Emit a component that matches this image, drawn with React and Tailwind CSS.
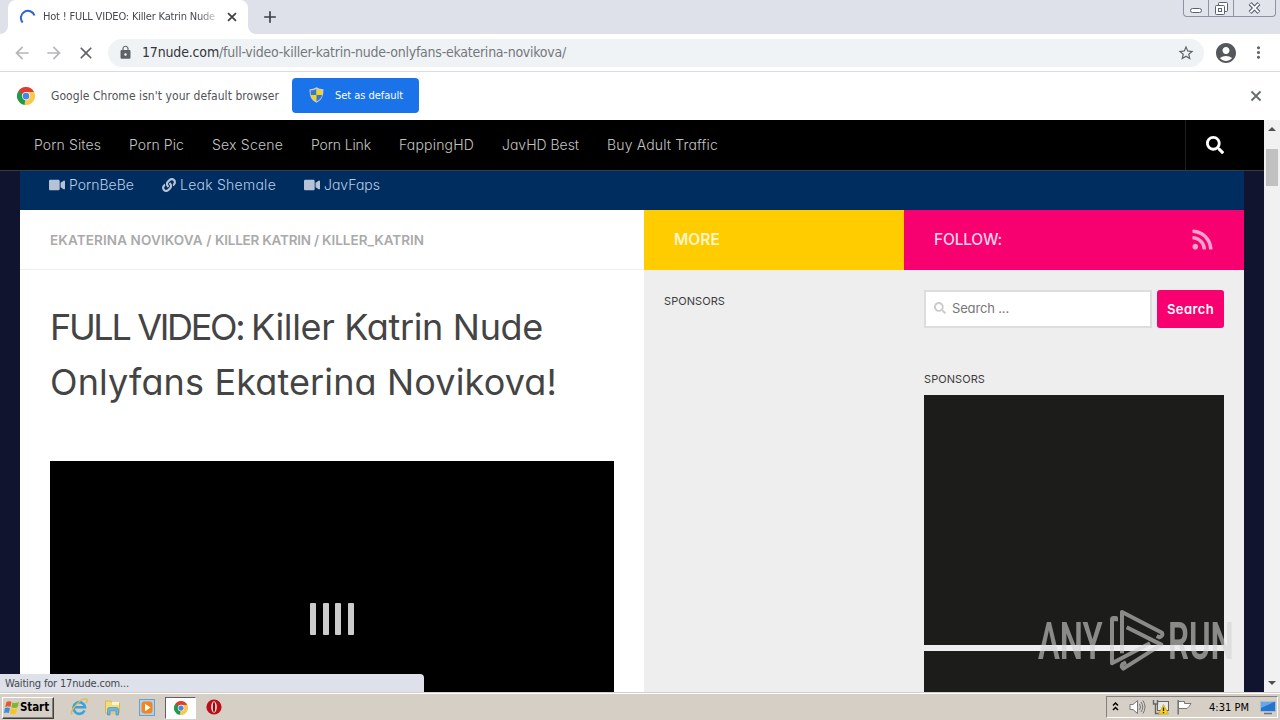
import React, { useLayoutEffect, useRef } from "react";
import { FaVideo, FaLink, FaRss, FaSearch } from "react-icons/fa";
import { MdLock, MdStarBorder, MdAccountCircle, MdMoreVert, MdArrowBack, MdArrowForward, MdClose, MdAdd } from "react-icons/md";

const POPPINS = "font-['Inter',sans-serif] [font-feature-settings:'cv11']";
const TAHOMA = "font-['DejaVu_Sans_Condensed','DejaVu_Sans',sans-serif] [font-stretch:condensed]";

/* Single line of text whose tracking is adjusted to fill the given width. */
function Line({ w, className = "", children }) {
  const ref = useRef(null);
  useLayoutEffect(() => {
    const el = ref.current;
    el.style.letterSpacing = "0px";
    const n = el.textContent.length;
    el.style.letterSpacing = (w - el.getBoundingClientRect().width) / n + "px";
  }, [w]);
  return (
    <span ref={ref} className={"inline-block whitespace-pre " + className}>
      {children}
    </span>
  );
}

function Cross({ size, className }) {
  return (
    <svg width={size} height={size} viewBox="0 0 16 16" className={"shrink-0 " + className}>
      <path d="M3.500 3.500 12.500 12.500M12.500 3.500 3.500 12.500" stroke="currentColor" strokeWidth="2" />
    </svg>
  );
}

function Chrome({ size }) {
  return (
    <svg width={size} height={size} viewBox="0 0 48 48" className="shrink-0">
      <path d="M24 24 3.2 12A24 24 0 0 1 44.8 12Z" fill="#e33b2e" />
      <path d="M24 24 44.8 12A24 24 0 0 1 24 48Z" fill="#fbc94a" />
      <path d="M24 24 24 48A24 24 0 0 1 3.2 12Z" fill="#229a4a" />
      <path d="M24 13H44.8L46 15 34 29Z" fill="#fbc94a" />
      <path d="M33.5 29.5 23 48 20 47.6 22 34Z" fill="#fbc94a" />
      <path d="M14.5 29.5 3.2 12 10 11 19 20Z" fill="#229a4a" />
      <path d="M24 13H45L42 9 24 6 8 11 14.5 20Z" fill="#e33b2e" />
      <circle cx="24" cy="24" r="11" fill="#fff" />
      <circle cx="24" cy="24" r="9" fill="#4a86e8" />
    </svg>
  );
}

function TabStrip() {
  return (
    <div className="flex h-[34px] items-start bg-[#dee1e9]">
      <div className="h-[34px] w-2 bg-white">
        <div className="h-full w-full rounded-br-lg bg-[#dee1e9]" />
      </div>
      <div className="flex h-[34px] w-[240px] items-center rounded-t-lg bg-white pl-[11px]">
        <svg width="17" height="17" viewBox="0 0 17 17" className="shrink-0">
          <path d="M3.700 13.500A7 7 0 1 1 15.500 6.500" fill="none" stroke="#2f66cf" strokeWidth="2" />
        </svg>
        <div className="ml-[7px] w-[173px] overflow-hidden text-[11px] leading-4 text-[#45484d] [mask-image:linear-gradient(to_right,black_155px,transparent_178px)]">
          <Line w={172}>Hot ! FULL VIDEO: Killer Katrin Nude</Line>
        </div>
        <Cross size={14} className="ml-[9px] text-[#3c4043]" />
      </div>
      <div className="h-[34px] w-2 bg-white">
        <div className="h-full w-full rounded-bl-lg bg-[#dee1e9]" />
      </div>
      <MdAdd className="ml-[4px] mt-[7px] text-[20px] text-[#3c4043]" />
      <div className="ml-auto mr-[4px] flex h-[17px] w-[93px] rounded-b border border-t-0 border-[#8d93a1] bg-[#e1e4eb] text-[#596070]">
        <div className="flex w-[25px] items-end justify-center border-r border-[#8d93a1] pb-[3px]">
          <div className="h-[5px] w-[12px] rounded-sm border border-[#596070] bg-white" />
        </div>
        <div className="flex w-[25px] items-center justify-center border-r border-[#8d93a1]">
          <svg width="13" height="13" viewBox="0 0 13 13" fill="#fff" stroke="#596070">
            <rect x="3.5" y=".5" width="9" height="9" rx="1" />
            <rect x=".5" y="3.5" width="9" height="9" rx="1" />
            <rect x="3.5" y="6.5" width="3" height="3" />
          </svg>
        </div>
        <div className="flex flex-1 items-center justify-center">
          <svg width="13" height="12" viewBox="0 0 13 12">
            <path d="M2 1.5 11 10.5M11 1.5 2 10.5" stroke="#596070" strokeWidth="4" />
            <path d="M2.4 1.9 10.6 10.1M10.6 1.9 2.4 10.1" stroke="#fff" strokeWidth="2" />
          </svg>
        </div>
      </div>
    </div>
  );
}

function Toolbar() {
  return (
    <div className="flex h-[38px] items-center border-b border-[#d9dbdf] bg-white">
      <MdArrowBack className="ml-[12px] text-[20px] text-[#b4b6b9]" />
      <MdArrowForward className="ml-[12px] text-[20px] text-[#b4b6b9]" />
      <MdClose className="ml-[12px] text-[20px] text-[#5f6368]" />
      <div className="ml-[12px] flex h-[28px] w-[1096px] items-center rounded-full bg-[#f0f3f5] pl-[10px] pr-[9px]">
        <MdLock className="text-[15px] text-[#5f6368]" />
        <div className="ml-[9px] pb-[2px] text-[14px] leading-5 text-[#74787d]">
          <Line w={77} className="text-[#33363a]">17nude.com</Line>
          <Line w={347}>/full-video-killer-katrin-nude-onlyfans-ekaterina-novikova/</Line>
        </div>
        <MdStarBorder className="ml-auto text-[18px] text-[#5f6368]" />
      </div>
      <MdAccountCircle className="ml-[10px] text-[24px] text-[#54585d]" />
      <MdMoreVert className="ml-[11px] text-[19px] text-[#5f6368]" />
    </div>
  );
}

function InfoBar() {
  return (
    <div className="flex h-[48px] items-center bg-white">
      <div className="ml-[17px] flex"><Chrome size={18} /></div>
      <div className="ml-[16px] text-[12px] leading-4 text-[#505358]">
        <Line w={228}>Google Chrome isn't your default browser</Line>
      </div>
      <div className="mb-[2px] ml-[13px] flex h-[35px] w-[127px] items-center rounded-[4px] bg-[#1a73e8] pl-[17px] text-[11px] leading-4 text-white">
        <svg width="15" height="16" viewBox="0 0 15 16">
          <path d="M7.5.3C9.5 1.6 12 2.2 14.4 2.2 14.5 8 13.500 12.500 7.5 15.800 1.5 12.500.5 8 .6 2.2 3 2.200 5.500 1.600 7.500.3Z" fill="#c9ced4" />
          <path d="M7.500 1.700V8H1.800C1.600 6.300 1.600 4.800 1.700 3.300 4 3.200 5.800 2.700 7.500 1.700Z" fill="#3a79c9" />
          <path d="M7.500 1.700V8H13.200C13.400 6.300 13.400 4.800 13.300 3.300 11 3.200 9.200 2.700 7.500 1.700Z" fill="#f8d21c" />
          <path d="M7.500 14.500V8H1.800C2.400 11 4.300 13 7.500 14.500Z" fill="#f8d21c" />
          <path d="M7.500 14.500V8H13.200C12.600 11 10.700 13 7.500 14.500Z" fill="#3a79c9" />
        </svg>
        <div className="ml-[11px] pt-[2px]"><Line w={68}>Set as default</Line></div>
      </div>
      <Cross size={16} className="ml-auto mr-[16px] text-[#6b6f74]" />
    </div>
  );
}

const nav = [
  ["Porn Sites", 67],
  ["Porn Pic", 55],
  ["Sex Scene", 71],
  ["Porn Link", 60],
  ["FappingHD", 75],
  ["JavHD Best", 77],
  ["Buy Adult Traffic", 111],
];

function SiteNav() {
  return (
    <div className="flex h-[51px] shrink-0 items-center border-b border-[#333a48] bg-black pl-[34px] text-[14px] font-light leading-5 text-[#c4c4c4]">
      <div className="flex gap-[28px]">
        {nav.map(([t, w]) => <Line key={t} w={w}>{t}</Line>)}
      </div>
      <div className="ml-auto flex h-[50px] w-[79px] items-center border-l border-[#1e1e1e] pb-[1px] pl-[20px]">
        <FaSearch className="text-[18px] text-white" />
      </div>
    </div>
  );
}

function SubNav() {
  return (
    <div className="flex h-[39px] shrink-0 gap-[28px] bg-[#002d60] pl-[29px] pt-[4px] text-[14px] font-light leading-5 text-[#b9cbe3]">
      <div className="flex items-center gap-[4px] self-start"><FaVideo className="text-[16px] text-[#b6c3d6]" /><Line w={65}>PornBeBe</Line></div>
      <div className="flex items-center gap-[4px] self-start"><FaLink className="text-[14px] text-[#b6c3d6]" /><Line w={96}>Leak Shemale</Line></div>
      <div className="flex items-center gap-[4px] self-start"><FaVideo className="text-[16px] text-[#b6c3d6]" /><Line w={56}>JavFaps</Line></div>
    </div>
  );
}

function Article() {
  return (
    <div className="w-[624px] overflow-hidden bg-white">
      <div className="flex h-[60px] items-center border-b border-[#eee] pl-[30px] text-[13.500px] font-semibold leading-5 text-[#aaa]">
        <Line w={165}>EKATERINA NOVIKOVA / </Line>
        <Line w={107}>KILLER KATRIN / </Line>
        <Line w={102}>KILLER_KATRIN</Line>
      </div>
      <h1 className="pl-[30px] pt-[30px] text-[36px] leading-[55px] text-[#444]">
        <Line w={201}>FULL VIDEO: </Line>
        <Line w={292}>Killer Katrin Nude</Line>
        <br />
        <Line w={507}>Onlyfans Ekaterina Novikova!</Line>
      </h1>
      <div className="mx-[30px] mt-[51px] flex h-[316px] items-center justify-center gap-[6.700px] bg-black">
        {[0, 1, 2, 3].map((i) => <div key={i} className="h-[32px] w-[6px] rounded-[1px] bg-[#ccc]" />)}
      </div>
    </div>
  );
}

function Middle() {
  return (
    <div className="w-[260px] bg-[#eee]">
      <div className="flex h-[60px] items-center bg-[#fc0] pl-[30px] text-[15.500px] font-semibold leading-5 text-[#fff5cc]">
        <Line w={46}>MORE</Line>
      </div>
      <div className="pl-[20px] pt-[23px] text-[11px] leading-4 text-[#3c3c3c]">
        <Line w={61}>SPONSORS</Line>
      </div>
    </div>
  );
}

function Sidebar() {
  return (
    <div className="w-[340px] bg-[#eee]">
      <div className="flex h-[60px] items-center justify-between bg-[#f7006f] pb-[1px] pl-[30px] pr-[30px] text-[15.500px] font-medium leading-5 text-[#ffd3ea]">
        <Line w={68}>FOLLOW:</Line>
        <FaRss className="text-[23px] text-[#ffa2d0]" />
      </div>
      <div className="px-[20px] pt-[20px]">
        <div className="flex h-[38px] gap-[5px]">
          <div className="flex w-[228px] items-center border-2 border-[#ddd] bg-white pb-[2px] pl-[8px] text-[13px] leading-5 text-[#777]">
            <FaSearch className="text-[12px] text-[#ccc]" />
            <div className="ml-[6px]"><Line w={57}>Search ...</Line></div>
          </div>
          <div className="flex w-[67px] items-center justify-center rounded-[3px] bg-[#f7006f] text-[13px] font-semibold leading-5 text-white">
            <Line w={47}>Search</Line>
          </div>
        </div>
        <div className="mt-[43px] text-[11px] leading-4 text-[#3c3c3c]">
          <Line w={61}>SPONSORS</Line>
        </div>
        <div className="mt-[8px] h-[250px] bg-[#1c1d1a]" />
        <div className="mt-[6px] h-[60px] bg-[#1c1d1a]" />
      </div>
    </div>
  );
}

function Scrollbar() {
  return (
    <div className="flex w-4 flex-col items-center bg-[#f1f1f1]">
      <svg width="16" height="17" viewBox="0 0 16 17"><path d="M4 11 8 7 12 11Z" fill="#505050" /></svg>
      <div className="mt-[12px] h-[37px] w-[12px] bg-[#c1c1c1]" />
      <svg width="16" height="17" viewBox="0 0 16 17" className="mt-auto"><path d="M4 6 8 10 12 6Z" fill="#505050" /></svg>
    </div>
  );
}

function Watermark() {
  return (
    <svg width="206" height="74" viewBox="0 0 206 74" className="absolute left-[1034px] top-[606px] opacity-60 [font-stretch:normal]">
      <g fill="#d4d4d4" fontFamily="Roboto, sans-serif" fontSize="51" fontWeight="600">
        <g transform="translate(4 53) scale(.64 1)"><text textLength="101" lengthAdjust="spacingAndGlyphs">ANY</text></g>
        <g transform="translate(134 53) scale(.64 1)"><text textLength="103" lengthAdjust="spacingAndGlyphs">RUN</text></g>
      </g>
      <g transform="translate(66 -6) scale(.3333)" fill="none" stroke="#d4d4d4" strokeWidth="12" strokeLinejoin="round">
        <path d="M48 64V54H40Q36 54 36 60V190L150 130" />
        <path d="M66 160V36L186 98Q190 108 178 112L170 108" />
        <path d="M80 82 184 134 70 206Q62 200 68 192L78 187" />
      </g>
    </svg>
  );
}

function Taskbar() {
  return (
    <div className="flex h-[28px] shrink-0 items-center border-t border-[#d4d0c8] bg-[#d5cfc6] shadow-[inset_0_1px_0_#fff]">
      <div className="ml-[2px] mt-[2px] flex h-[22px] w-[52px] items-center border border-b-[#404040] border-l-white border-r-[#404040] border-t-white pl-[1px] shadow-[inset_-1px_-1px_0_#808080]">
        <svg width="16" height="15" viewBox="0 0 16 15">
          <path d="M2.500 2Q5 .5 7.500 2L6.300 7Q4 5.600 1.200 7Z" fill="#e8562a" />
          <path d="M8.500 2.400Q11.500 4 15 2L13.600 7.200Q10.500 8.700 7.300 7.300Z" fill="#7db928" />
          <path d="M1 8Q3.500 6.800 6 8.200L4.800 13Q2.500 11.800 0 13Z" fill="#3b8de0" />
          <path d="M7 8.500Q10 10 13.300 8.300L12 13.400Q9 15 5.800 13.500Z" fill="#fcc419" />
        </svg>
        <div className="pb-[1px] text-[11.500px] font-bold leading-4 text-black"><Line w={29}>Start</Line></div>
      </div>
      <svg width="18" height="18" viewBox="0 0 18 18" className="ml-[16px] mt-[1px]">
        <path d="M14.500 12.500A5.800 5.800 0 1 1 15 9.200H5" fill="none" stroke="#36a2df" strokeWidth="2.600" />
        <path d="M2 16.500C-1 13 12-2 17 1.500 17.500 2.500 17 4 16 5" fill="none" stroke="#e2b94a" strokeWidth="1.300" />
      </svg>
      <svg width="18" height="17" viewBox="0 0 18 17" className="ml-[16px] mt-[1px]">
        <path d="M1.500 2H7L8.500 4H15.500V14H1.500Z" fill="#f5dc7b" stroke="#d4b04c" strokeWidth=".8" />
        <path d="M8 3H15V6H8Z" fill="#fff5c7" />
        <path d="M3.500 16V10.500Q3.500 8.500 5.500 8.500H12.500Q14.500 8.500 14.500 10.500V16H12V12H6V16Z" fill="#69b6e4" stroke="#3c8abb" strokeWidth=".6" />
      </svg>
      <svg width="16" height="17" viewBox="0 0 16 17" className="ml-[17px] mt-[1px]">
        <rect x=".5" y=".5" width="15" height="16" fill="#afd3ee" stroke="#6aa0cc" />
        <rect x="2.500" y="2.500" width="11" height="12" rx="3" fill="#f2851c" />
        <path d="M6 4.800 11.500 8.500 6 12.200Z" fill="#fff" />
      </svg>
      <div className="ml-[10px] mt-[2px] flex h-[22px] w-[31px] items-center justify-center border border-b-white border-l-[#606060] border-r-white border-t-[#606060] bg-white">
        <Chrome size={14} />
      </div>
      <svg width="16" height="16" viewBox="0 0 16 16" className="ml-[10px] mt-[1px]">
        <circle cx="8" cy="8" r="7.600" fill="#b80f18" />
        <ellipse cx="8" cy="8" rx="2.800" ry="5.800" fill="#f3e5e5" />
        <ellipse cx="8" cy="8" rx="1.200" ry="5" fill="#8d0910" />
      </svg>
      <div className="ml-auto mr-[2px] mt-[1px] flex h-[22px] w-[172px] items-center border border-b-white border-l-[#808080] border-r-white border-t-[#808080]">
        <svg width="9" height="11" viewBox="0 0 9 11" className="mb-[2px] ml-[4px]" fill="none" stroke="#000" strokeWidth="1.500">
          <path d="M2 4.500 4.500 2 7 4.500M2 9 4.500 6.500 7 9" />
        </svg>
        <svg width="17" height="16" viewBox="0 0 17 16" className="ml-[9px]" stroke="#777" fill="none">
          <path d="M1 5.500H4L8.500 1.500V14.500L4 10.500H1Z" fill="#fff" />
          <path d="M10.500 5Q12.500 8 10.500 11M12 3Q15.500 8 12 13M14 1.500Q18 8 14 14.500" />
        </svg>
        <svg width="18" height="16" viewBox="0 0 18 16" className="ml-[6px]">
          <rect x="5.500" y="2.500" width="11" height="9" fill="#e7eaed" stroke="#666" />
          <path d="M1.500 1V5H5.500V1M3.500 5V14.500H9" fill="none" stroke="#666" strokeWidth="1.400" />
          <path d="M11.500 5.500 16.500 15H6.500Z" fill="#f7d21e" stroke="#c7a410" strokeWidth=".7" />
          <path d="M11.500 8.500V12M11.500 13V14.200" stroke="#222" strokeWidth="1.300" />
        </svg>
        <svg width="17" height="16" viewBox="0 0 17 16" className="ml-[6px]">
          <path d="M2.500 2.500H8.500V4.500H15L13 7.500 11 9.500H3" fill="#fff" stroke="#777" />
          <path d="M2.200 1V15.500" stroke="#777" strokeWidth="1.600" />
        </svg>
        <div className="ml-[16px] pt-[1px] text-[11px] leading-4 text-black"><Line w={40}>4:31 PM</Line></div>
        <svg width="16" height="15" viewBox="0 0 16 15" className="ml-[11px]">
          <rect x=".5" y="1.500" width="15" height="10" rx="1" fill="#2674cc" stroke="#a9bed0" />
          <path d="M1 2H14L1 8Z" fill="#69a7e7" />
          <path d="M4 13.500H12" stroke="#5f7285" strokeWidth="1.500" />
        </svg>
      </div>
    </div>
  );
}

export default function App() {
  return (
    <div className={"relative flex h-[720px] w-[1280px] flex-col overflow-hidden " + TAHOMA}>
      <TabStrip />
      <Toolbar />
      <InfoBar />
      <div className="flex h-[572px] shrink-0 overflow-hidden">
        <div className={"flex w-[1264px] flex-col overflow-hidden bg-[#10142f] " + POPPINS}>
          <SiteNav />
          <div className="mx-[20px] flex min-h-0 flex-1 flex-col">
            <SubNav />
            <div className="flex min-h-0 flex-1 overflow-hidden">
              <Article />
              <Middle />
              <Sidebar />
            </div>
          </div>
        </div>
        <Scrollbar />
      </div>
      <Taskbar />
      <div className="absolute left-0 top-[674px] flex h-[18px] w-[424px] items-center rounded-tr-[4px] bg-[#dee1e9] pl-[5px] pt-[1px] text-[11px] leading-4 text-[#45484d]">
        <Line w={124}>Waiting for 17nude.com...</Line>
      </div>
      <Watermark />
    </div>
  );
}
